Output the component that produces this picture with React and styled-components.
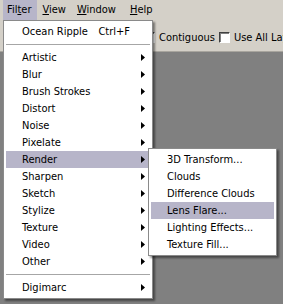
import React from 'react'
import styled, { createGlobalStyle } from 'styled-components'

const GlobalStyle = createGlobalStyle`
    body {
        margin: 0;
        font-family: "DejaVu Sans Condensed", "DejaVu Sans", sans-serif;
        font-size: 11px;
        color: #000;
    }
`

const filters = [
    'Artistic', 'Blur', 'Brush Strokes', 'Distort', 'Noise', 'Pixelate',
    'Render', 'Sharpen', 'Sketch', 'Stylize', 'Texture', 'Video', 'Other',
]

const renderItems = [
    '3D Transform...', 'Clouds', 'Difference Clouds', 'Lens Flare...',
    'Lighting Effects...', 'Texture Fill...',
]

const Arrow = () => (
    <ArrowIcon width="4" height="7" viewBox="0 0 4 7">
        <path d="M0 0 L4 3.5 L0 7 Z" fill="#000" />
    </ArrowIcon>
)

const App = () => {
    return (
        <Screen>
            <GlobalStyle />
            <MenuBar>
                <MenuTitle $active>Fil<u>t</u>er</MenuTitle>
                <MenuTitle><u>V</u>iew</MenuTitle>
                <MenuTitle><u>W</u>indow</MenuTitle>
                <MenuTitle $gap={3}><u>H</u>elp</MenuTitle>
            </MenuBar>
            <OptionsBar>
                <Check />
                <Label>Contiguous</Label>
                <Check />
                <Label>Use All Layers</Label>
            </OptionsBar>
            <Canvas />

            <Dropdown>
                <Item>
                    <span>Ocean Ripple</span>
                    <Shortcut>Ctrl+F</Shortcut>
                </Item>
                <Separator />
                {filters.map((name) => (
                    <Item key={name} $active={name === 'Render'}>
                        <span>{name}</span>
                        <Arrow />
                    </Item>
                ))}
                <Separator />
                <Item>
                    <span>Digimarc</span>
                    <Arrow />
                </Item>
            </Dropdown>

            <SubMenu>
                {renderItems.map((name) => (
                    <Item key={name} $active={name === 'Lens Flare...'}>
                        <span>{name}</span>
                    </Item>
                ))}
            </SubMenu>
        </Screen>
    )
}

export default App

const Screen = styled.div`
    position: relative;
    width: 283px;
    height: 304px;
    overflow: hidden;
    display: flex;
    flex-direction: column;
    background-color: #808080;
`
const MenuBar = styled.div`
    height: 20px;
    display: flex;
    padding-left: 3px;
    background-color: #d4d0c8;
`
const MenuTitle = styled.div`
    line-height: 20px;
    padding: 0 6px 0 4px;
    margin-right: 1px;
    margin-left: ${(p) => p.$gap || 0}px;
    background-color: ${(p) => (p.$active ? '#b7b5c9' : 'transparent')};
`
const OptionsBar = styled.div`
    height: 32px;
    box-sizing: border-box;
    padding: 4px 0 0 144px;
    display: flex;
    align-items: center;
    overflow: hidden;
    background-color: #d4d0c8;
    border-bottom: 1px solid #a8a59e;
`
const Check = styled.span`
    flex-shrink: 0;
    width: 11px;
    height: 11px;
    box-sizing: border-box;
    background-color: #fff;
    border-top: 1px solid #404040;
    border-left: 1px solid #404040;
    border-right: 1px solid #fff;
    border-bottom: 1px solid #fff;
    box-shadow: inset 1px 1px 0 #808080;
    margin-right: 4px;
`
const Label = styled.span`
    flex-shrink: 0;
    margin-right: 4px;
    white-space: nowrap;
`
const Canvas = styled.div`
    flex: 1;
    background-color: #808080;
`
const Dropdown = styled.div`
    position: absolute;
    left: 3px;
    top: 20px;
    width: 150px;
    box-sizing: border-box;
    padding: 2px;
    background-color: #fff;
    border: 1px solid #8a8a8a;
    box-shadow: 2px 2px 2px rgba(0, 0, 0, 0.45);
`
const SubMenu = styled(Dropdown)`
    left: 148px;
    top: 148px;
    width: 129px;
`
const Item = styled.div`
    height: 17px;
    display: flex;
    align-items: center;
    padding: 0 5px 0 16px;
    white-space: nowrap;
    background-color: ${(p) => (p.$active ? '#b7b5c9' : 'transparent')};
`
const Shortcut = styled.span`
    margin-left: auto;
    margin-right: 15px;
`
const ArrowIcon = styled.svg`
    margin-left: auto;
    display: block;
`
const Separator = styled.div`
    height: 1px;
    margin: 4px 0;
    background-color: #a6a6a6;
`
